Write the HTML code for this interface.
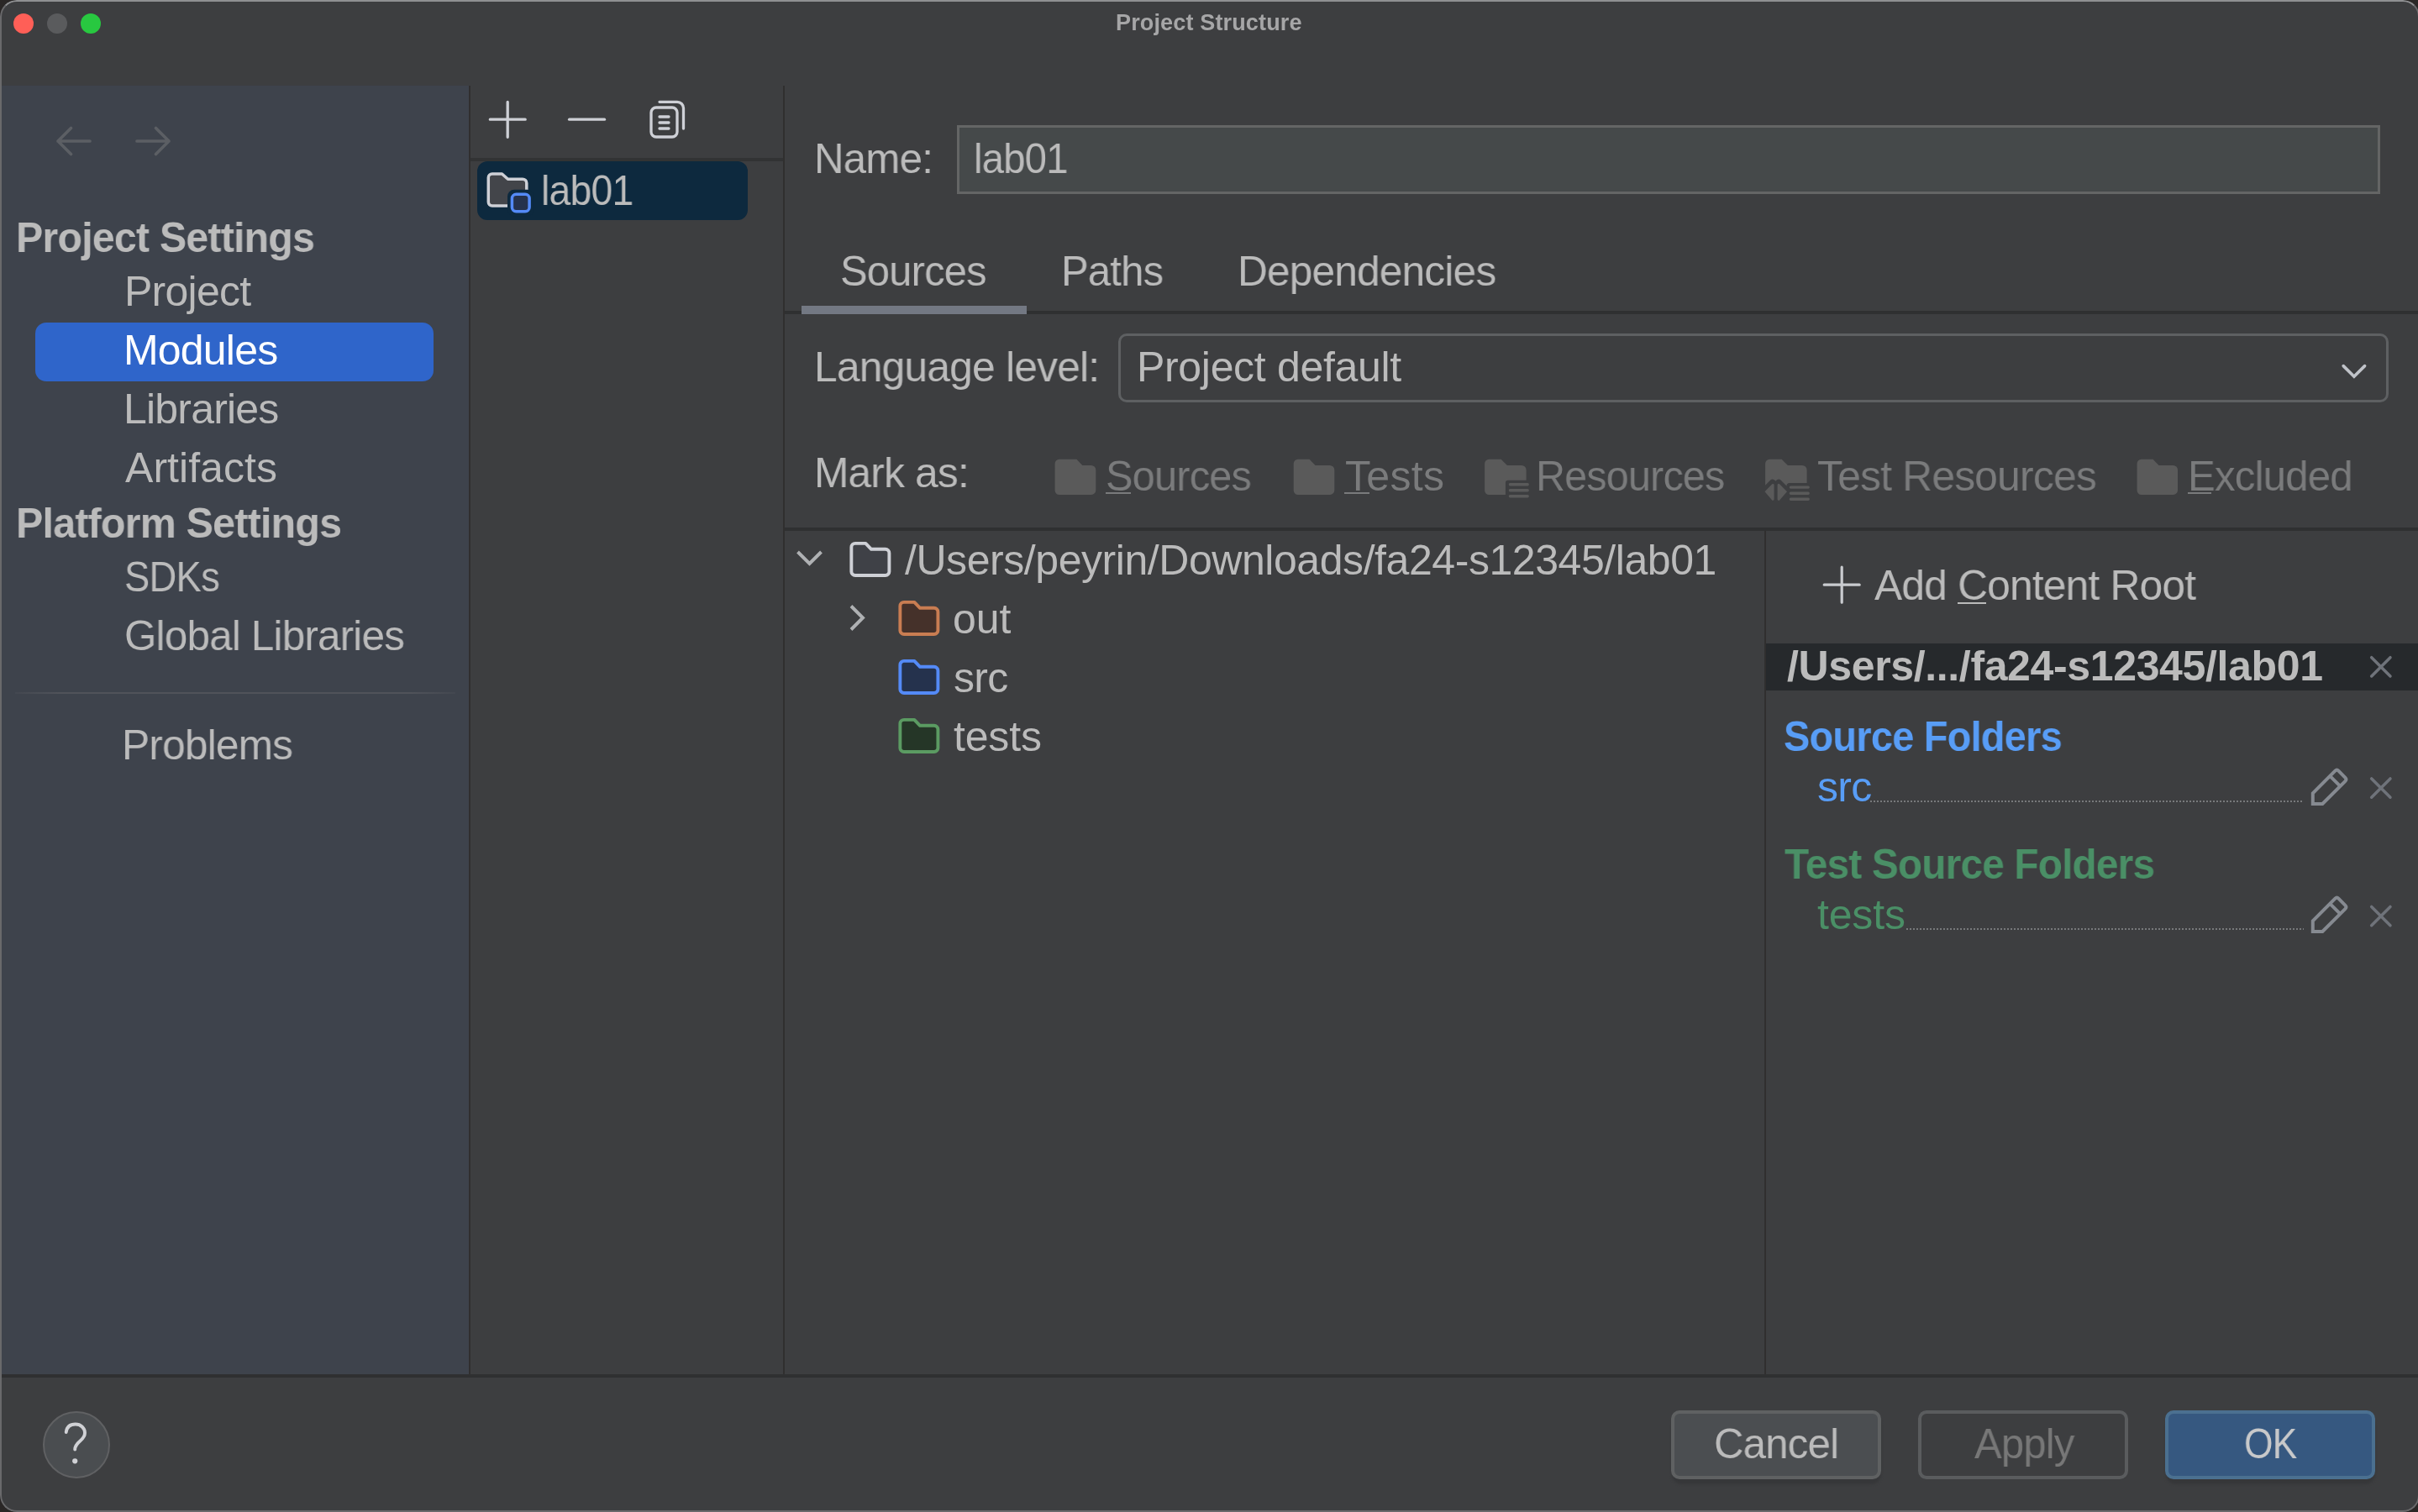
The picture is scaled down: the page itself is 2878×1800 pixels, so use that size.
<!DOCTYPE html>
<html><head><meta charset="utf-8">
<style>
html,body{margin:0;padding:0;width:2878px;height:1800px;overflow:hidden;background:#2a2726;}
#win{position:absolute;left:0;top:0;width:2880px;height:1800px;border-radius:20px;background:#3d3e40;overflow:hidden;}
#win:after{content:"";position:absolute;left:0;top:0;right:0;bottom:0;border-radius:20px;border:2px solid #69696b;border-top-color:#8f9092;pointer-events:none;}
.t{will-change:transform;position:absolute;font-family:"Liberation Sans",sans-serif;font-size:50px;line-height:50px;white-space:pre;color:#bbbbbb;}
.abs{position:absolute;}
svg.ov{position:absolute;left:0;top:0;overflow:visible;}
</style></head>
<body>
<div id="win">
  <!-- traffic lights -->
  <div class="abs" style="left:16px;top:16px;width:24px;height:24px;border-radius:50%;background:#ff5f57"></div>
  <div class="abs" style="left:56px;top:16px;width:24px;height:24px;border-radius:50%;background:#5a5b5d"></div>
  <div class="abs" style="left:96px;top:16px;width:24px;height:24px;border-radius:50%;background:#28c840"></div>
  <div class="t" style="left:1328.3px;top:14px;font-size:27px;line-height:27px;font-weight:bold;color:#a6a6a7;letter-spacing:0.15px;">Project Structure</div>

  <!-- sidebar -->
  <div class="abs" style="left:0;top:102px;width:558px;height:1534px;background:#3e434c"></div>
  <div class="abs" style="left:558px;top:102px;width:2px;height:1534px;background:#302f2f"></div>
  <div class="abs" style="left:932px;top:102px;width:2px;height:1534px;background:#302f2f"></div>

  <svg class="ov" width="1" height="1">
    <g fill="none" stroke="#5c5f64" stroke-width="3.7" stroke-linecap="round" stroke-linejoin="round">
      <path d="M107,168 H69 M84.5,152.5 L69,168 L84.5,183.5"/>
      <path d="M163,168 H201 M185.5,152.5 L201,168 L185.5,183.5"/>
    </g>
  </svg>

  <div class="t" style="left:19.3px;top:258px;font-size:50px;line-height:50px;font-weight:bold;letter-spacing:-0.8px;transform:scaleX(0.9656);transform-origin:0 0;">Project Settings</div>
  <div class="t" style="left:147.5px;top:322px;font-size:50px;line-height:50px;letter-spacing:-0.74px;">Project</div>
  <div class="abs" style="left:42px;top:384px;width:474px;height:70px;border-radius:13px;background:#2f65ca"></div>
  <div class="t" style="left:147.2px;top:392px;font-size:50px;line-height:50px;color:#ffffff;letter-spacing:-0.8px;transform:scaleX(0.9978);transform-origin:0 0;">Modules</div>
  <div class="t" style="left:147.2px;top:462px;font-size:50px;line-height:50px;letter-spacing:-0.8px;transform:scaleX(0.9975);transform-origin:0 0;">Libraries</div>
  <div class="t" style="left:149.2px;top:532px;font-size:50px;line-height:50px;letter-spacing:0.04px;">Artifacts</div>
  <div class="t" style="left:19.4px;top:598px;font-size:50px;line-height:50px;font-weight:bold;letter-spacing:-0.8px;transform:scaleX(0.9674);transform-origin:0 0;">Platform Settings</div>
  <div class="t" style="left:148.2px;top:662px;font-size:50px;line-height:50px;letter-spacing:-0.8px;transform:scaleX(0.9068);transform-origin:0 0;">SDKs</div>
  <div class="t" style="left:148.0px;top:732px;font-size:50px;line-height:50px;letter-spacing:-0.8px;transform:scaleX(0.9870);transform-origin:0 0;">Global Libraries</div>
  <div class="abs" style="left:18px;top:824px;width:524px;height:2px;background:linear-gradient(90deg,rgba(80,83,90,0.3),#50535a 10%,#50535a 90%,rgba(80,83,90,0.3))"></div>
  <div class="t" style="left:145.0px;top:862px;font-size:50px;line-height:50px;letter-spacing:-0.8px;transform:scaleX(0.9921);transform-origin:0 0;">Problems</div>

  <!-- middle list panel -->
  <svg class="ov" width="1" height="1">
    <g fill="none" stroke="#ced0d6" stroke-width="3.3" stroke-linecap="round" stroke-linejoin="round">
      <path d="M604.2,121.5 V163.3 M583.3,142.2 H625.2"/>
      <path d="M677.6,142.2 H719.5"/>
      <rect x="775" y="128" width="31" height="35" rx="6"/>
      <path d="M785,139 H796 M785,146 H796 M785,153 H796"/>
      <path d="M785,121.3 H806 A7.5,7.5 0 0 1 813.5,128.8 V153"/>
    </g>
  </svg>
  <div class="abs" style="left:560px;top:188px;width:372px;height:4px;background:#323334"></div>
  <div class="abs" style="left:568px;top:192px;width:322px;height:70px;border-radius:12px;background:#0d293e"></div>
  <svg class="ov" width="1" height="1">
    <path d="M581.3,211.5 A4.5,4.5 0 0 1 585.8,207 H597.5 L604.5,213.2 H622 A4.8,4.8 0 0 1 626.8,218 V240.5 A4.5,4.5 0 0 1 622.3,245 H585.8 A4.5,4.5 0 0 1 581.3,240.5 Z" fill="#43454a" stroke="#ced0d6" stroke-width="3.5" stroke-linejoin="round"/>
    <rect x="604" y="225.8" width="31.5" height="31.5" rx="8" fill="#0d293e"/>
    <rect x="609.4" y="231.2" width="20.7" height="20.6" rx="5" fill="#25324d" stroke="#548af7" stroke-width="3.5"/>
  </svg>
  <div class="t" style="left:644.1px;top:202px;font-size:50px;line-height:50px;letter-spacing:-0.8px;transform:scaleX(0.9263);transform-origin:0 0;">lab01</div>

  <!-- content -->
  <div class="t" style="left:968.5px;top:164px;font-size:50px;line-height:50px;letter-spacing:-0.8px;transform:scaleX(0.9840);transform-origin:0 0;">Name:</div>
  <div class="abs" style="left:1139px;top:149px;width:1694px;height:82px;box-sizing:border-box;border:3px solid #646565;background:#45494a"></div>
  <div class="t" style="left:1159.4px;top:164px;font-size:50px;line-height:50px;letter-spacing:-0.8px;transform:scaleX(0.9446);transform-origin:0 0;">lab01</div>

  <div class="t" style="left:999.7px;top:298px;font-size:50px;line-height:50px;letter-spacing:-0.8px;transform:scaleX(0.9777);transform-origin:0 0;">Sources</div>
  <div class="t" style="left:1263.3px;top:298px;font-size:50px;line-height:50px;letter-spacing:-0.8px;transform:scaleX(0.9786);transform-origin:0 0;">Paths</div>
  <div class="t" style="left:1473.2px;top:298px;font-size:50px;line-height:50px;letter-spacing:-0.8px;transform:scaleX(0.9912);transform-origin:0 0;">Dependencies</div>
  <div class="abs" style="left:934px;top:370px;width:1944px;height:4px;background:#2f3031"></div>
  <div class="abs" style="left:954px;top:364px;width:268px;height:10px;background:#737883"></div>

  <div class="t" style="left:969.2px;top:412px;font-size:50px;line-height:50px;letter-spacing:-0.8px;transform:scaleX(0.9947);transform-origin:0 0;">Language level:</div>
  <div class="abs" style="left:1331px;top:397px;width:1512px;height:82px;box-sizing:border-box;border:3.5px solid #5e6062;border-radius:10px"></div>
  <div class="t" style="left:1353.1px;top:412px;font-size:50px;line-height:50px;letter-spacing:-0.32px;">Project default</div>
  <svg class="ov" width="1" height="1">
    <path d="M2789.2,435.6 L2801.9,448.2 L2814.6,435.6" fill="none" stroke="#c0c3c9" stroke-width="3.6" stroke-linecap="round" stroke-linejoin="miter"/>
  </svg>

  <div class="t" style="left:969.0px;top:538px;font-size:50px;line-height:50px;letter-spacing:-0.8px;transform:scaleX(0.9921);transform-origin:0 0;">Mark as:</div>
  <svg class="ov" width="1" height="1">
    <g fill="#5a5a5a">
      <path d="M1255.6,552 A5.2,5.2 0 0 1 1260.8,546.8 H1281.4 L1288.3,553.9 H1298.7 A5.6,5.6 0 0 1 1304.3,559.5 V583.6 A5.3,5.3 0 0 1 1299,588.9 H1260.8 A5.2,5.2 0 0 1 1255.6,583.7 Z"/>
      <path d="M1539.7,552 A5.2,5.2 0 0 1 1544.9,546.8 H1558.5 L1565.5,553.9 H1582.7 A5.6,5.6 0 0 1 1588.3,559.5 V583.6 A5.3,5.3 0 0 1 1583,588.9 H1544.9 A5.2,5.2 0 0 1 1539.7,583.7 Z"/>
      <path d="M2543.6,552 A5.2,5.2 0 0 1 2548.8,546.8 H2562.5 L2569.5,553.9 H2586.4 A5.6,5.6 0 0 1 2592,559.5 V583.6 A5.3,5.3 0 0 1 2586.7,588.9 H2548.8 A5.2,5.2 0 0 1 2543.6,583.7 Z"/>
      <path d="M1767.1,552 A5.2,5.2 0 0 1 1772.3,546.8 H1786.6 L1793.9,553.9 H1811 A5.6,5.6 0 0 1 1816.6,559.5 V571.7 H1795 A3.1,3.1 0 0 0 1791.9,574.8 V589 H1772.3 A5.2,5.2 0 0 1 1767.1,583.8 Z"/>
      <path d="M2101.1,552 A5.2,5.2 0 0 1 2106.3,546.8 H2120.6 L2127.9,553.9 H2145 A5.6,5.6 0 0 1 2150.6,559.5 V574.9 H2130 A3.5,3.5 0 0 0 2126.5,578.4 L2119.5,571.5 A3.5,3.5 0 0 0 2115,571.3 L2113.4,572.8 L2111.8,571.3 A3.5,3.5 0 0 0 2107.3,571.5 L2101.1,577.8 Z"/>
      <path d="M2100.5,585.3 L2109,576.5 A1.5,1.5 0 0 1 2111.6,577.5 V594.5 A1.5,1.5 0 0 1 2109,595.3 Z"/>
      <path d="M2127,585.3 L2118.3,576.5 A1.5,1.5 0 0 0 2115.6,577.5 V594.5 A1.5,1.5 0 0 0 2118.3,595.3 Z"/>
    </g>
    <g fill="none" stroke="#5a5a5a" stroke-width="3.4" stroke-linecap="round">
      <path d="M1797.4,576.7 H1818.2 M1797.4,583.7 H1818.2 M1797.4,590.8 H1818.2"/>
      <path d="M2131.4,580.1 H2152.2 M2131.4,587.2 H2152.2 M2131.4,594.2 H2152.2"/>
    </g>
  </svg>
  <div class="t" style="left:1316.1px;top:542px;font-size:50px;line-height:50px;color:#7a7b7c;letter-spacing:-0.8px;transform:scaleX(0.9737);transform-origin:0 0;">Sources</div>
  <div class="abs" style="left:1316px;top:586px;width:30px;height:2px;background:#7a7b7c"></div>
  <div class="t" style="left:1601px;top:542px;font-size:50px;line-height:50px;color:#7a7b7c;letter-spacing:0.33px;">Tests</div>
  <div class="abs" style="left:1600px;top:586px;width:30px;height:2px;background:#7a7b7c"></div>
  <div class="t" style="left:1827.7px;top:542px;font-size:50px;line-height:50px;color:#7a7b7c;letter-spacing:-0.8px;transform:scaleX(0.9684);transform-origin:0 0;">Resources</div>
  <div class="t" style="left:2163.3px;top:542px;font-size:50px;line-height:50px;color:#7a7b7c;letter-spacing:-0.8px;transform:scaleX(0.9955);transform-origin:0 0;">Test Resources</div>
  <div class="t" style="left:2603.6px;top:542px;font-size:50px;line-height:50px;color:#7a7b7c;letter-spacing:-0.8px;transform:scaleX(0.9825);transform-origin:0 0;">Excluded</div>
  <div class="abs" style="left:2604px;top:586px;width:28px;height:2px;background:#7a7b7c"></div>

  <div class="abs" style="left:934px;top:628px;width:1944px;height:4px;background:#2f3031"></div>

  <!-- tree -->
  <svg class="ov" width="1" height="1">
    <g fill="none" stroke="#afb1b3" stroke-width="3.9">
      <path d="M949.5,657 L963.5,671 L977.5,657"/>
      <path d="M1013,721.5 L1027,735.5 L1013,749.5"/>
    </g>
    <path d="M1013.35,651.5 A4.6,4.6 0 0 1 1017.95,646.9 H1030.3 L1037,653.8 H1053.8 A4.6,4.6 0 0 1 1058.4,658.4 V680.4 A4.6,4.6 0 0 1 1053.8,685 H1017.95 A4.6,4.6 0 0 1 1013.35,680.4 Z" fill="#3f4147" stroke="#ced0d6" stroke-width="3.9" stroke-linejoin="round"/>
    <path d="M1071.35,721.5 A4.6,4.6 0 0 1 1075.95,716.9 H1088.3 L1095,723.8 H1111.8 A4.6,4.6 0 0 1 1116.4,728.4 V750.4 A4.6,4.6 0 0 1 1111.8,755 H1075.95 A4.6,4.6 0 0 1 1071.35,750.4 Z" fill="#45312a" stroke="#c97d52" stroke-width="3.9" stroke-linejoin="round"/>
    <path d="M1071.35,791.5 A4.6,4.6 0 0 1 1075.95,786.9 H1088.3 L1095,793.8 H1111.8 A4.6,4.6 0 0 1 1116.4,798.4 V820.4 A4.6,4.6 0 0 1 1111.8,825 H1075.95 A4.6,4.6 0 0 1 1071.35,820.4 Z" fill="#25324d" stroke="#548af7" stroke-width="3.9" stroke-linejoin="round"/>
    <path d="M1071.35,861.5 A4.6,4.6 0 0 1 1075.95,856.9 H1088.3 L1095,863.8 H1111.8 A4.6,4.6 0 0 1 1116.4,868.4 V890.4 A4.6,4.6 0 0 1 1111.8,895 H1075.95 A4.6,4.6 0 0 1 1071.35,890.4 Z" fill="#253627" stroke="#5b9b62" stroke-width="3.9" stroke-linejoin="round"/>
  </svg>
  <div class="t" style="left:1077px;top:642px;font-size:50px;line-height:50px;letter-spacing:-0.44px;">/Users/peyrin/Downloads/fa24-s12345/lab01</div>
  <div class="t" style="left:1133.6px;top:712px;font-size:50px;line-height:50px;letter-spacing:-0.11px;">out</div>
  <div class="t" style="left:1135px;top:782px;font-size:50px;line-height:50px;letter-spacing:-0.73px;">src</div>
  <div class="t" style="left:1135.3px;top:852px;font-size:50px;line-height:50px;letter-spacing:-0.17px;">tests</div>

  <!-- right panel -->
  <div class="abs" style="left:2100px;top:632px;width:2px;height:1004px;background:#302f2f"></div>
  <svg class="ov" width="1" height="1">
    <path d="M2192.2,675.2 V717.2 M2171.2,696.2 H2213.2" fill="none" stroke="#c9cbcf" stroke-width="3.2" stroke-linecap="round"/>
  </svg>
  <div class="t" style="left:2231.0px;top:672px;font-size:50px;line-height:50px;letter-spacing:-0.8px;transform:scaleX(0.9938);transform-origin:0 0;">Add Content Root</div>
  <div class="abs" style="left:2330px;top:717px;width:34px;height:2px;background:#bbbbbb"></div>
  <div class="abs" style="left:2102px;top:766px;width:776px;height:56px;background:#26292c"></div>
  <div class="t" style="left:2126.9px;top:768px;font-size:50px;line-height:50px;font-weight:bold;letter-spacing:-0.36px;">/Users/.../fa24-s12345/lab01</div>
  <svg class="ov" width="1" height="1">
    <g fill="none" stroke="#6f737a" stroke-width="3.5" stroke-linecap="round">
      <path d="M2822.7,782.7 L2845,805 M2845,782.7 L2822.7,805"/>
      <path d="M2822.7,926.9 L2845,949.2 M2845,926.9 L2822.7,949.2"/>
      <path d="M2822.7,1079.4 L2845,1101.7 M2845,1079.4 L2822.7,1101.7"/>
    </g>
    <g fill="none" stroke="#868a91" stroke-width="4" stroke-linejoin="miter">
      <path d="M2752.8,957.00 V944.30 L2779.4,917.70 Q2781.4,915.70 2783.4,917.70 L2791.5,925.80 Q2793.5,927.80 2791.5,929.80 L2764.3,957.00 Z M2773.25,923.85 L2785.35,935.95"/>
      <path d="M2752.8,1109.00 V1096.30 L2779.4,1069.70 Q2781.4,1067.70 2783.4,1069.70 L2791.5,1077.80 Q2793.5,1079.80 2791.5,1081.80 L2764.3,1109.00 Z M2773.25,1075.85 L2785.35,1087.95"/>
    </g>
  </svg>
  <div class="t" style="left:2122.5px;top:852px;font-size:50px;line-height:50px;font-weight:bold;color:#589df6;letter-spacing:-0.8px;transform:scaleX(0.9382);transform-origin:0 0;">Source Folders</div>
  <div class="t" style="left:2163px;top:912px;font-size:50px;line-height:50px;color:#589df6;letter-spacing:-0.68px;">src</div>
  <div class="abs" style="left:2226px;top:953px;width:516px;height:2px;background:repeating-linear-gradient(90deg,#77797b 0 2px,transparent 2px 4px)"></div>
  <div class="t" style="left:2124.0px;top:1004px;font-size:50px;line-height:50px;font-weight:bold;color:#4a8f66;letter-spacing:-0.8px;transform:scaleX(0.9534);transform-origin:0 0;">Test Source Folders</div>
  <div class="t" style="left:2163.4px;top:1064px;font-size:50px;line-height:50px;color:#4a8f66;letter-spacing:-0.17px;">tests</div>
  <div class="abs" style="left:2269px;top:1105px;width:473px;height:2px;background:repeating-linear-gradient(90deg,#77797b 0 2px,transparent 2px 4px)"></div>

  <!-- bottom -->
  <div class="abs" style="left:0;top:1636px;width:2878px;height:4px;background:#2f3031"></div>
  <div class="abs" style="left:51px;top:1680px;width:80px;height:80px;box-sizing:border-box;border-radius:50%;background:#4a4d50;border:2px solid #606163"></div>
  <svg class="ov" width="1" height="1">
    <path d="M78.7,1705 C79.5,1698.5 84,1695.5 89.8,1695.5 C96,1695.5 101,1700 101,1705.8 C101,1710.5 98.3,1713 95.3,1715.5 C91.2,1719 89.2,1721.5 89.2,1725.6" fill="none" stroke="#d0d1d5" stroke-width="3.9" stroke-linecap="round"/>
    <circle cx="89.2" cy="1739.3" r="3.1" fill="#d0d1d5"/>
  </svg>

  <div class="abs" style="left:1990px;top:1685px;width:249px;height:82px;border-radius:12px;background:#363739;filter:blur(1.5px)"></div>
  <div class="abs" style="left:1989px;top:1679px;width:250px;height:82px;box-sizing:border-box;border-radius:10px;background:#4b4e51;border:4px solid #5f6162"></div>
  <div class="t" style="left:2040.0px;top:1694px;font-size:50px;line-height:50px;letter-spacing:-0.8px;transform:scaleX(0.9827);transform-origin:0 0;">Cancel</div>
  <div class="abs" style="left:2283px;top:1679px;width:250px;height:82px;box-sizing:border-box;border-radius:10px;border:4px solid #5a5c5e"></div>
  <div class="t" style="left:2349.6px;top:1694px;font-size:50px;line-height:50px;color:#777777;letter-spacing:-0.8px;transform:scaleX(0.9797);transform-origin:0 0;">Apply</div>
  <div class="abs" style="left:2578px;top:1685px;width:249px;height:82px;border-radius:12px;background:#363739;filter:blur(1.5px)"></div>
  <div class="abs" style="left:2577px;top:1679px;width:250px;height:82px;box-sizing:border-box;border-radius:10px;background:#365880;border:4px solid #4b7090"></div>
  <div class="t" style="left:2670.7px;top:1694px;font-size:50px;line-height:50px;color:#c8c9ca;letter-spacing:-0.8px;transform:scaleX(0.8872);transform-origin:0 0;">OK</div>
</div>
</body></html>
